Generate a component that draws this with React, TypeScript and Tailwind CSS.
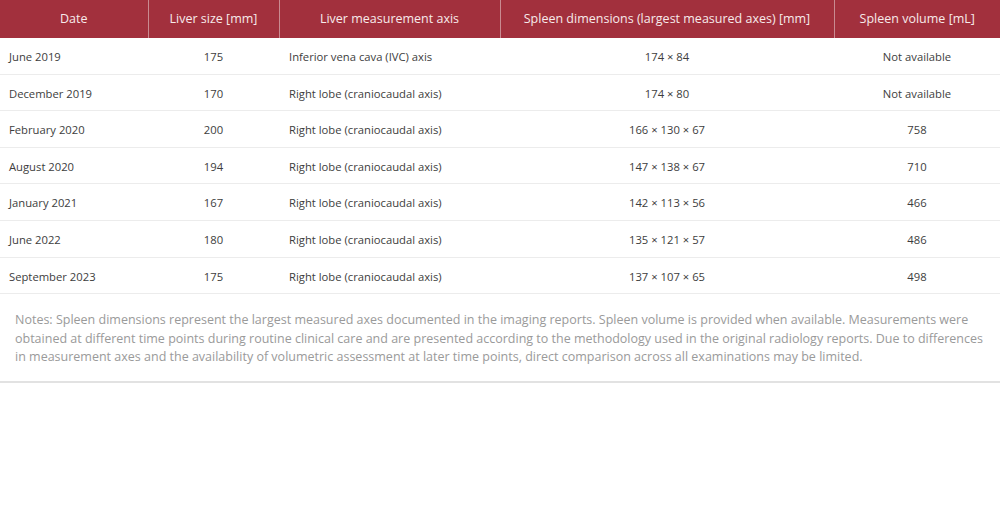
import React from "react";

const rows = [
  ["June 2019", "175", "Inferior vena cava (IVC) axis", "174 × 84", "Not available"],
  ["December 2019", "170", "Right lobe (craniocaudal axis)", "174 × 80", "Not available"],
  ["February 2020", "200", "Right lobe (craniocaudal axis)", "166 × 130 × 67", "758"],
  ["August 2020", "194", "Right lobe (craniocaudal axis)", "147 × 138 × 67", "710"],
  ["January 2021", "167", "Right lobe (craniocaudal axis)", "142 × 113 × 56", "466"],
  ["June 2022", "180", "Right lobe (craniocaudal axis)", "135 × 121 × 57", "486"],
  ["September 2023", "175", "Right lobe (craniocaudal axis)", "137 × 107 × 65", "498"],
];

export default function App() {
  return (
    <div
      className="w-[1000px] h-[532px] bg-white"
      style={{ fontFamily: '"Open Sans", sans-serif' }}
    >
      <div className="border-b-2 border-[#e2e2e2]">
        <table className="w-full table-fixed border-collapse text-[11.25px]">
          <colgroup>
            <col className="w-[148px]" />
            <col className="w-[131px]" />
            <col className="w-[221px]" />
            <col className="w-[334px]" />
            <col className="w-[166px]" />
          </colgroup>
          <thead>
            <tr className="bg-[#a2303d] text-[#f7eaea] h-[38px]">
              <th className="font-normal text-center border-r border-[#c98a91] text-[12.5px] pt-[1px]">Date</th>
              <th className="font-normal text-center border-r border-[#c98a91] text-[12.5px] pt-[1px]">Liver size [mm]</th>
              <th className="font-normal text-center border-r border-[#c98a91] text-[12.5px] pt-[1px]">Liver measurement axis</th>
              <th className="font-normal text-center border-r border-[#c98a91] text-[12.5px] pt-[1px]">Spleen dimensions (largest measured axes) [mm]</th>
              <th className="font-normal text-center text-[12.5px] pt-[1px]">Spleen volume [mL]</th>
            </tr>
          </thead>
          <tbody className="text-[#3d3d3d]">
            {rows.map((r, i) => (
              <tr key={i} className="border-b border-[#ececec]">
                <td className="pl-[9px] pt-[10px] pb-[8px] leading-[17.6px] text-left">{r[0]}</td>
                <td className="pt-[10px] pb-[8px] leading-[17.6px] text-center">{r[1]}</td>
                <td className="pl-[10px] pt-[10px] pb-[8px] leading-[17.6px] text-left">{r[2]}</td>
                <td className="pt-[10px] pb-[8px] leading-[17.6px] text-center">{r[3]}</td>
                <td className="pt-[10px] pb-[8px] leading-[17.6px] text-center">{r[4]}</td>
              </tr>
            ))}
          </tbody>
        </table>
        <p className="px-[15px] pt-[17px] pb-[14px] text-[12.5px] leading-[18.5px] text-[#9a9a9a]">
          Notes: Spleen dimensions represent the largest measured axes documented in the imaging reports. Spleen volume is provided when available. Measurements were obtained at different time points during routine clinical care and are presented according to the methodology used in the original radiology reports. Due to differences in measurement axes and the availability of volumetric assessment at later time points, direct comparison across all examinations may be limited.
        </p>
      </div>
    </div>
  );
}
